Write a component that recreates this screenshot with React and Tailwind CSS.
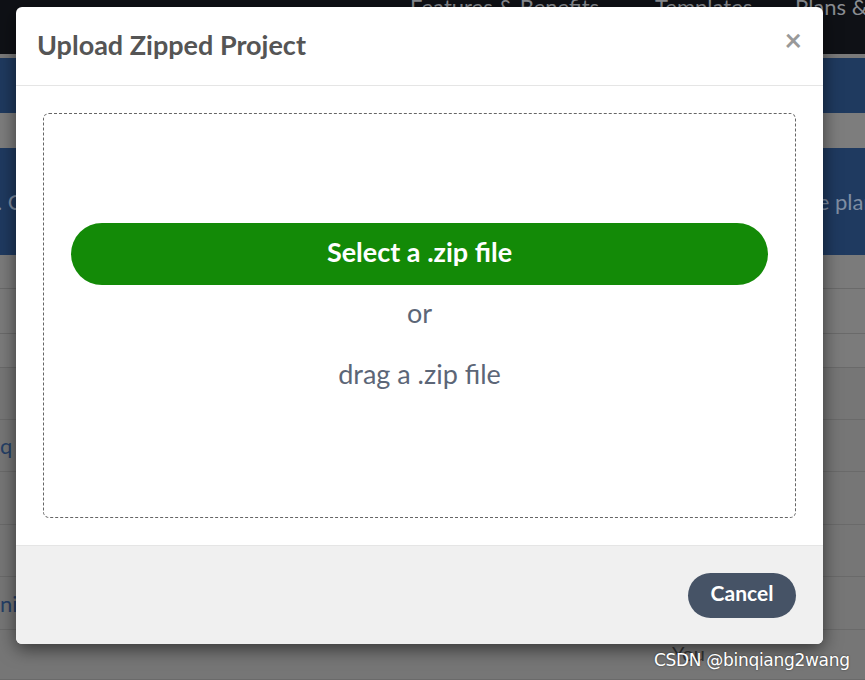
import React from 'react';

const rows = [
  { h: 'h-[34px]', text: '' },
  { h: 'h-[45px]', text: '' },
  { h: 'h-[34px]', text: '' },
  { h: 'h-[52px]', text: '', tone: 'bg-[#767676]' },
  { h: 'h-[52px]', text: 'q', tone: 'bg-[#767676]' },
  { h: 'h-[53px]', text: '', tone: 'bg-[#767676]' },
  { h: 'h-[52px]', text: '', tone: 'bg-[#767676]' },
  { h: 'h-[53px]', text: 'ni', tone: 'bg-[#767676]' },
  { h: 'h-[50px]', text: '', tone: 'bg-[#767676]' },
];

const UploadModal = () => (
  <div className="absolute left-[16px] top-[7px] w-[807px] bg-white rounded-[6px] shadow-[0_5px_18px_rgba(0,0,0,0.55)] overflow-hidden font-['Lato',sans-serif]">
    <div className="h-[79px] flex items-center justify-between pl-[21px] pr-[21px] border-b border-[#e5e5e5]">
      <h1 className="text-[27px] font-bold text-[#555555] leading-none -mt-[4px]">Upload Zipped Project</h1>
      <button className="text-[30px] leading-none text-[#999999] font-bold -mt-[15px]">×</button>
    </div>

    <div className="p-[27px]">
      <div className="h-[405px] border border-dashed border-[#666666] rounded-[6px] flex flex-col items-center pt-[109px] px-[27px]">
        <button className="w-full h-[62px] rounded-full bg-[#138a07] text-white text-[27px] font-bold leading-none pb-[5px]">
          Select a .zip file
        </button>
        <p className="mt-[10px] h-[36px] flex items-center text-[27px] text-[#5c6677]">or</p>
        <p className="mt-[25px] h-[36px] flex items-center text-[27px] text-[#5c6677]">drag a .zip file</p>
      </div>
    </div>

    <div className="h-[99px] bg-[#f0f0f0] border-t border-[#e5e5e5] flex items-center justify-end pr-[27px]">
      <button className="w-[108px] h-[45px] rounded-full bg-[#465366] text-white text-[21px] font-bold leading-none pb-[5px]">
        Cancel
      </button>
    </div>
  </div>
);

const App = () => {
  return (
    <div className="relative w-[865px] h-[680px] overflow-hidden bg-[#7a7a7a] font-['Lato',sans-serif]">
      {/* dimmed page behind the modal */}
      <div className="h-[58px] bg-[#0f1116] flex whitespace-nowrap pl-[410px] text-[22px] text-[#8a8d92] leading-none -mt-[4px]">
        <span className="w-[245px] shrink-0">Features &amp; Benefits</span>
        <span className="w-[140px] shrink-0">Templates</span>
        <span className="shrink-0">Plans &amp; Pricing</span>
      </div>
      <div className="h-[55px] bg-[#1f3a5f] mt-[4px]"></div>
      <div className="h-[35px] bg-[#7d7d7d]"></div>
      <div className="h-[107px] bg-[#1f3a60] flex items-center whitespace-nowrap text-[22px] text-[#7f8ea3] -ml-[3px]">
        <span className="shrink-0">. Co</span>
        <span className="shrink-0 ml-[783px]">e plans</span>
      </div>
      {rows.map((r, i) => (
        <div
          key={i}
          className={`${r.h} ${r.tone || 'bg-[#7b7b7b]'} border-b border-[#6a6a6a] flex items-center text-[22px] text-[#253f66]`}
        >
          {r.text}
        </div>
      ))}
      <span className="absolute left-[672px] top-[638px] text-[20px] text-[#333]">You</span>

      <UploadModal />

      <span className="absolute left-[654px] top-[648px] text-[17px] text-white font-['DejaVu_Sans',sans-serif] [text-shadow:0_0_2px_rgba(0,0,0,0.6)] tracking-[-0.3px]">
        CSDN @binqiang2wang
      </span>
    </div>
  );
};

export default App;
